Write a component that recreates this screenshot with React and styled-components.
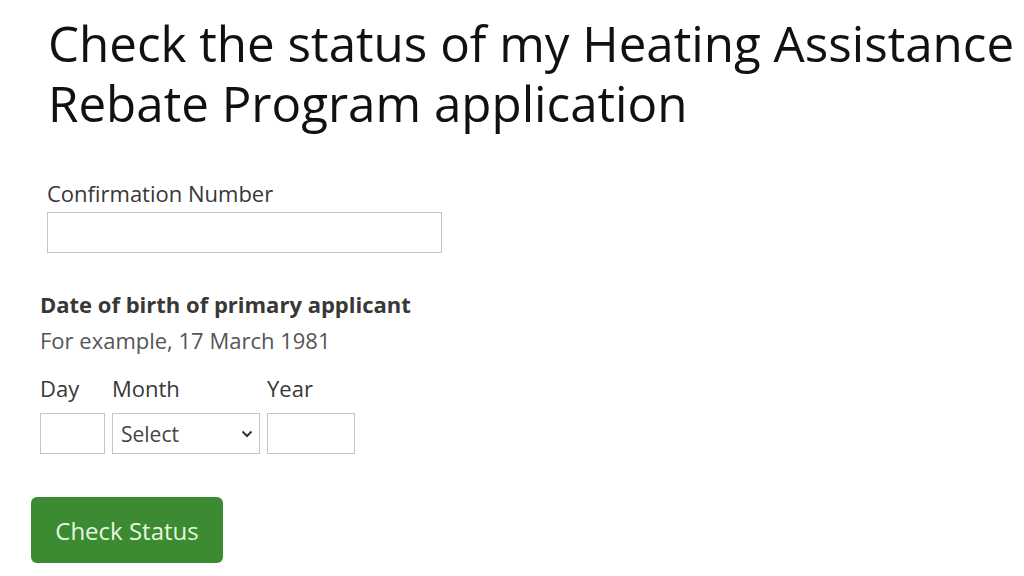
import React from "react";
import styled, { createGlobalStyle } from "styled-components";

const GlobalStyle = createGlobalStyle`
  html, body {
    margin: 0;
    padding: 0;
    background: #ffffff;
    font-family: "Open Sans", "Noto Sans", sans-serif;
  }
`;

const Page = styled.main`
  width: 1024px;
  height: 576px;
  overflow: hidden;
  box-sizing: border-box;
  padding-top: 13px;
`;

const Heading = styled.h1`
  margin: 0 0 0 48px;
  font-size: 49.3px;
  font-weight: 400;
  line-height: 60px;
  color: #111;
  white-space: nowrap;
`;

const ConfirmationField = styled.div`
  margin: 45px 0 0 47px;
  display: flex;
  flex-direction: column;
  gap: 4px;
`;

const Label = styled.label`
  font-size: 22px;
  font-weight: 500;
  color: #383838;
  line-height: 30px;
`;

const TextInput = styled.input`
  box-sizing: border-box;
  width: ${(p) => p.$width}px;
  height: 41px;
  border: 1px solid #c4c4c4;
  margin: 0;
  padding: 0 8px;
  font-family: inherit;
  font-size: 20px;
`;

const DateGroup = styled.fieldset`
  margin: 36px 0 0 40px;
  padding: 0;
  border: none;
`;

const Legend = styled.legend`
  padding: 0;
  font-size: 22px;
  font-weight: 700;
  color: #383838;
  line-height: 30px;
`;

const Hint = styled.div`
  margin-top: 6px;
  font-size: 22px;
  color: #555;
  line-height: 30px;
`;

const DateRow = styled.div`
  margin-top: 18px;
  display: flex;
  gap: 7px;
`;

const DatePart = styled.div`
  display: flex;
  flex-direction: column;
  gap: 10px;
`;

const SelectWrap = styled.div`
  position: relative;
  width: 148px;
  height: 41px;
`;

const Select = styled.select`
  appearance: none;
  box-sizing: border-box;
  width: 100%;
  height: 100%;
  border: 1px solid #c4c4c4;
  background: #fff;
  margin: 0;
  padding: 0 8px;
  font-family: inherit;
  font-size: 21px;
  color: #444;
`;

const Chevron = styled.svg`
  position: absolute;
  right: 7px;
  top: 17px;
  pointer-events: none;
`;

const SubmitButton = styled.button`
  margin: 43px 0 0 31px;
  width: 192px;
  height: 66px;
  border: none;
  border-radius: 6px;
  background: #3c8a31;
  color: #e6f7df;
  font-family: inherit;
  font-size: 24px;
  cursor: pointer;
`;

export default function App() {
  return (
    <>
      <GlobalStyle />
      <Page>
        <Heading>
          Check the status of my Heating Assistance
          <br />
          Rebate Program application
        </Heading>
        <ConfirmationField>
          <Label htmlFor="conf">Confirmation Number</Label>
          <TextInput id="conf" $width={395} />
        </ConfirmationField>
        <DateGroup>
          <Legend>Date of birth of primary applicant</Legend>
          <Hint>For example, 17 March 1981</Hint>
          <DateRow>
            <DatePart>
              <Label htmlFor="day">Day</Label>
              <TextInput id="day" $width={65} />
            </DatePart>
            <DatePart>
              <Label htmlFor="month">Month</Label>
              <SelectWrap>
                <Select id="month" defaultValue="">
                  <option value="">Select</option>
                </Select>
                <Chevron width="12" height="8" viewBox="0 0 12 8">
                  <path d="M1.5 1.5 L6 6 L10.5 1.5" fill="none" stroke="#333" strokeWidth="2" />
                </Chevron>
              </SelectWrap>
            </DatePart>
            <DatePart>
              <Label htmlFor="year">Year</Label>
              <TextInput id="year" $width={88} />
            </DatePart>
          </DateRow>
        </DateGroup>
        <SubmitButton type="button">Check Status</SubmitButton>
      </Page>
    </>
  );
}
